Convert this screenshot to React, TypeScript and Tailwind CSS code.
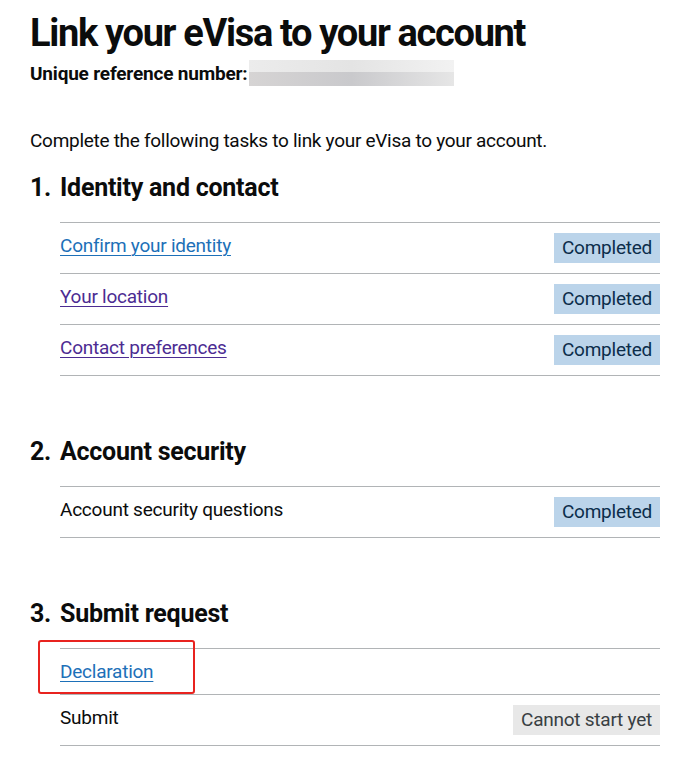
import React from 'react';

type Task = {
  name: string;
  href?: boolean;
  visited?: boolean;
  status?: 'completed' | 'cannot';
  highlight?: boolean;
};

type Section = {
  num: string;
  title: string;
  tasks: Task[];
};

const sections: Section[] = [
  {
    num: '1.',
    title: 'Identity and contact',
    tasks: [
      { name: 'Confirm your identity', href: true, status: 'completed' },
      { name: 'Your location', href: true, visited: true, status: 'completed' },
      { name: 'Contact preferences', href: true, visited: true, status: 'completed' },
    ],
  },
  {
    num: '2.',
    title: 'Account security',
    tasks: [{ name: 'Account security questions', status: 'completed' }],
  },
  {
    num: '3.',
    title: 'Submit request',
    tasks: [
      { name: 'Declaration', href: true, highlight: true },
      { name: 'Submit', status: 'cannot' },
    ],
  },
];

const Tag: React.FC<{ status: 'completed' | 'cannot' }> = ({ status }) =>
  status === 'completed' ? (
    <span className="block bg-[#bbd4ea] px-2 py-[5px] text-[19px] leading-5 text-[#0c2d4a]">Completed</span>
  ) : (
    <span className="block bg-[#e8e8e8] px-2 py-[5px] text-[19px] leading-5 text-[#383f43]">Cannot start yet</span>
  );

const TaskRow: React.FC<{ task: Task }> = ({ task }) => (
  <li className="relative flex items-start justify-between border-b border-[#b1b4b6] py-[10px]">
    {task.href ? (
      <a
        href="#"
        className={`text-[19px] leading-[25px] underline decoration-1 underline-offset-[3px] ${
          task.visited ? 'text-[#4c2c92]' : 'text-[#1d70b8]'
        }`}
      >
        {task.name}
      </a>
    ) : (
      <span className="text-[19px] leading-[25px] text-[#0b0c0c]">{task.name}</span>
    )}
    {task.status && <Tag status={task.status} />}
    {task.highlight && (
      <div className="pointer-events-none absolute -left-[22px] -top-[9px] h-[54px] w-[157px] rounded-[3px] border-2 border-[#e8231f]" />
    )}
  </li>
);

export default function App() {
  return (
    <div
      className="min-h-screen bg-white pl-[30px] pr-[18px] pt-[10px] text-[#0b0c0c]"
      style={{ fontFamily: 'Roboto, "Liberation Sans", sans-serif' }}
    >
      <h1 className="text-[38px] font-bold leading-[46px] tracking-[-0.035em]">Link your eVisa to your account</h1>
      <div className="mt-[4px] flex items-center">
        <span className="text-[19px] font-bold leading-[25px] tracking-[-0.01em]">Unique reference number:</span>
        <span className="ml-[2px] flex h-[26px] w-[205px] flex-col">
          <span className="h-[12px] w-full bg-gradient-to-r from-[#ececec] via-[#e4e4e4] to-[#f2f2f2]" />
          <span className="h-[14px] w-full bg-gradient-to-r from-[#d6d4d4] via-[#c9c9cc] to-[#e6e6e6]" />
        </span>
      </div>

      <p className="mt-[42px] text-[19px] leading-[25px] tracking-[-0.015em]">
        Complete the following tasks to link your eVisa to your account.
      </p>

      {sections.map((s, i) => (
        <section key={s.num} className={i === 0 ? 'mt-[20px]' : 'mt-[61px]'}>
          <h2 className="flex text-[25px] font-bold leading-[30px] tracking-[-0.01em]">
            <span className="w-[30px]">{s.num}</span>
            <span>{s.title}</span>
          </h2>
          <ul className="ml-[30px] mt-[19px] border-t border-[#b1b4b6] tracking-[-0.015em]">
            {s.tasks.map((t) => (
              <TaskRow key={t.name} task={t} />
            ))}
          </ul>
        </section>
      ))}
    </div>
  );
}
